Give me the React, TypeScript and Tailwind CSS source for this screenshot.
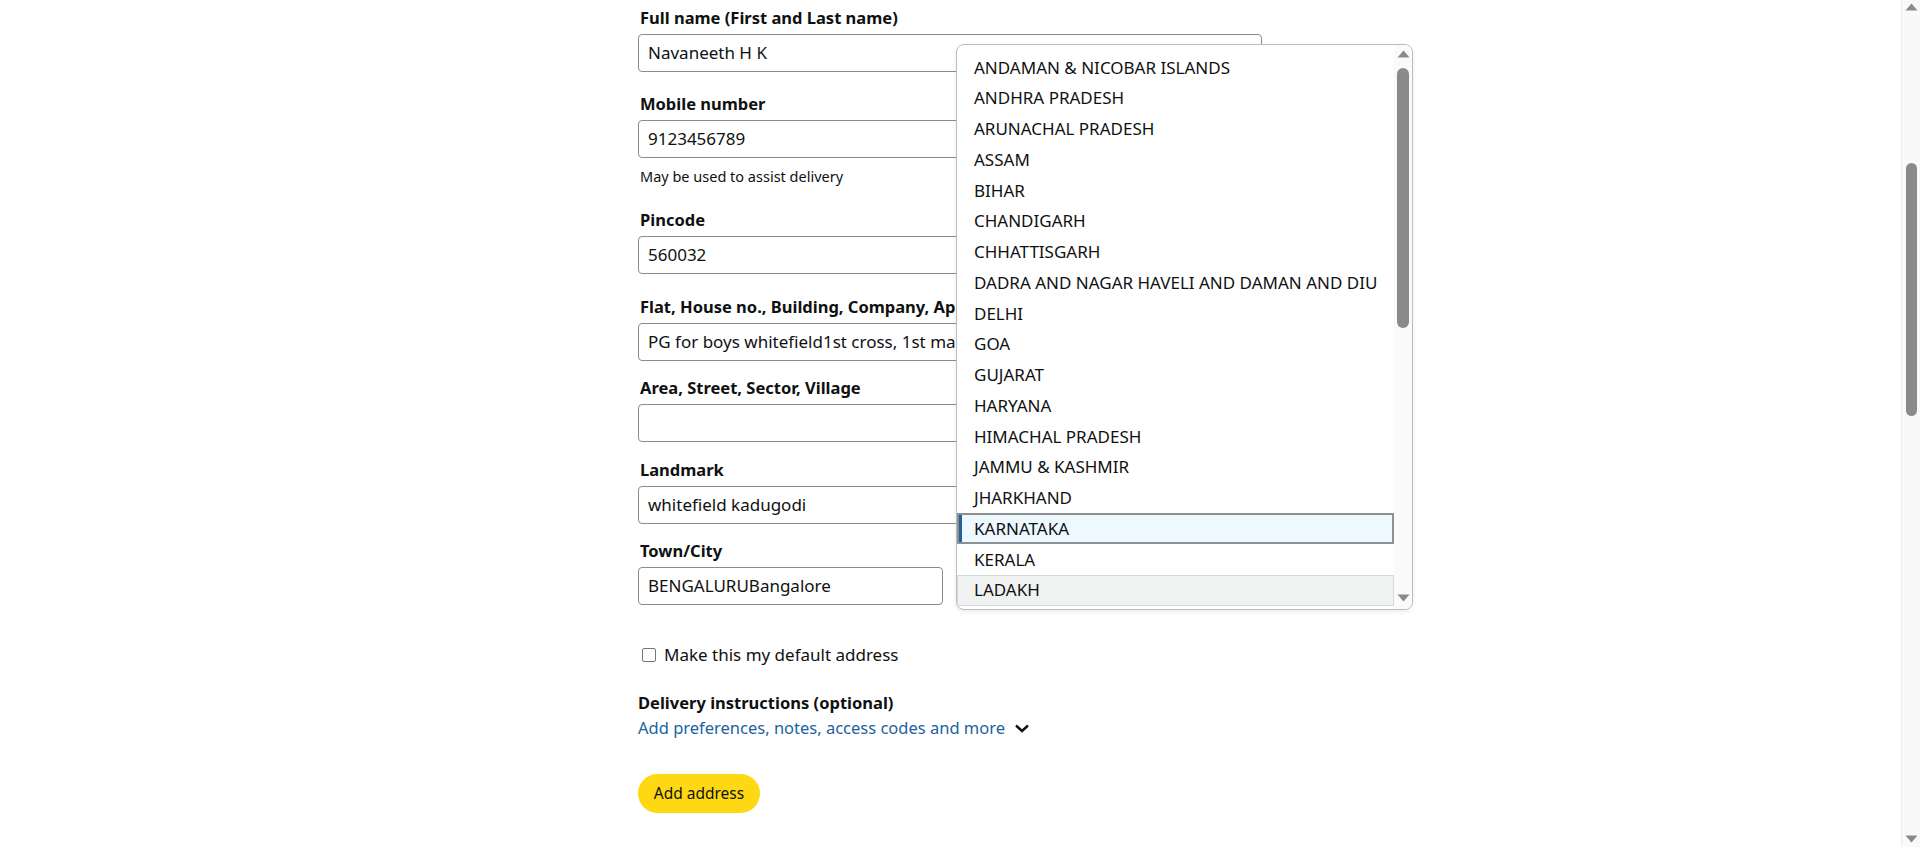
import React from "react";

const states = [
  "ANDAMAN & NICOBAR ISLANDS",
  "ANDHRA PRADESH",
  "ARUNACHAL PRADESH",
  "ASSAM",
  "BIHAR",
  "CHANDIGARH",
  "CHHATTISGARH",
  "DADRA AND NAGAR HAVELI AND DAMAN AND DIU",
  "DELHI",
  "GOA",
  "GUJARAT",
  "HARYANA",
  "HIMACHAL PRADESH",
  "JAMMU & KASHMIR",
  "JHARKHAND",
  "KARNATAKA",
  "KERALA",
  "LADAKH",
];

function Label({ children, className = "" }: { children: React.ReactNode; className?: string }) {
  return (
    <div className={"whitespace-nowrap text-[16.5px] font-bold leading-[20px] text-[#0F1111] " + className}>
      {children}
    </div>
  );
}

function Input({ value, className = "" }: { value: string; className?: string }) {
  return (
    <div
      className={
        "mt-[6px] flex h-[38px] items-center overflow-hidden whitespace-nowrap rounded-[4px] border border-[#888C8C] bg-white px-[9px] text-[17px] text-[#0F1111] " +
        className
      }
    >
      {value}
    </div>
  );
}

function Dropdown() {
  return (
    <div className="absolute left-[318px] top-[44px] flex h-[566px] w-[457px] overflow-hidden rounded-[8px] border border-[#BDBDBD] bg-white shadow-[0_2px_4px_rgba(0,0,0,0.08)]">
      <div className="flex-1 overflow-hidden pt-[7px]">
        {states.map((s) => {
          if (s === "KARNATAKA") {
            return (
              <div
                key={s}
                className="relative flex h-[30.75px] items-center whitespace-nowrap border-2 border-[#8D9090] bg-[#EDF8FF] pl-[15px] text-[17px] text-[#0F1111]"
              >
                <span className="absolute left-0 top-0 h-full w-[3px] bg-[#2162A1]" />
                {s}
              </div>
            );
          }
          if (s === "LADAKH") {
            return (
              <div
                key={s}
                className="flex h-[30.75px] items-center whitespace-nowrap border border-[#D5D9D9] bg-[#F0F2F2] pl-[16px] text-[17px] text-[#0F1111]"
              >
                {s}
              </div>
            );
          }
          return (
            <div key={s} className="flex h-[30.75px] items-center whitespace-nowrap pl-[17px] text-[17px] text-[#0F1111]">
              {s}
            </div>
          );
        })}
      </div>
      <div className="flex w-[18px] flex-col items-center bg-[#FAFAFA] pt-[5px]">
        <svg width="13" height="8" viewBox="0 0 13 8">
          <path d="M6.5 0.5 L12.5 7.5 L0.5 7.5 Z" fill="#8A8A8A" />
        </svg>
        <div className="mt-[10px] h-[260px] w-[12px] rounded-full bg-[#8A8A8A]" />
        <div className="flex-1" />
        <svg width="13" height="8" viewBox="0 0 13 8" className="mb-[7px]">
          <path d="M0.5 0.5 L12.5 0.5 L6.5 7.5 Z" fill="#8A8A8A" />
        </svg>
      </div>
    </div>
  );
}

function PageScrollbar() {
  return (
    <div className="flex h-full w-[19px] flex-col items-center border-l border-[#ECECEC] bg-[#F9F9F9]">
      <svg width="13" height="8" viewBox="0 0 13 8" className="mt-[3px]">
        <path d="M6.5 0.5 L12.5 7.5 L0.5 7.5 Z" fill="#8A8A8A" />
      </svg>
      <div className="mt-[152px] h-[253px] w-[11px] rounded-full bg-[#8A8A8A]" />
      <div className="flex-1" />
      <svg width="13" height="8" viewBox="0 0 13 8" className="mb-[4px]">
        <path d="M0.5 0.5 L12.5 0.5 L6.5 7.5 Z" fill="#8A8A8A" />
      </svg>
    </div>
  );
}

export default function App() {
  return (
    <div className="flex h-[847px] w-full overflow-hidden bg-white font-['Noto_Sans',sans-serif] text-[#0F1111]">
      <main className="flex-1">
        <div className="relative mx-auto w-[625px] pt-[8px]">
          <Label className="pl-[2px]">Full name (First and Last name)</Label>
          <Input value="Navaneeth H K" className="w-[624px]" />

          <Label className="mt-[22px] pl-[2px]">Mobile number</Label>
          <Input value="9123456789" className="w-[624px]" />
          <div className="mt-[10px] pl-[2px] text-[14.5px] leading-[16px] text-[#0F1111]">May be used to assist delivery</div>

          <Label className="mt-[26px] pl-[2px]">Pincode</Label>
          <Input value="560032" className="w-[624px]" />

          <Label className="mt-[23px] pl-[2px]">Flat, House no., Building, Company, Apartment</Label>
          <Input value="PG for boys whitefield1st cross, 1st main road" className="w-[624px]" />

          <Label className="mt-[17px] pl-[2px]">Area, Street, Sector, Village</Label>
          <Input value="" className="w-[624px]" />

          <Label className="mt-[18px] pl-[2px]">Landmark</Label>
          <Input value="whitefield kadugodi" className="w-[624px]" />

          <Label className="mt-[17px] pl-[2px]">Town/City</Label>
          <Input value="BENGALURUBangalore" className="w-[305px]" />

          <label className="mt-[40px] flex h-[20px] items-center gap-[8px] pl-[4px] text-[17px]">
            <span className="h-[14px] w-[14px] rounded-[2px] border border-[#767676] bg-white" />
            <span>Make this my default address</span>
          </label>

          <Label className="mt-[28px]">Delivery instructions (optional)</Label>
          <div className="mt-[5px] flex h-[20px] items-center gap-[9px] text-[16.5px] text-[#2162A1]">
            <span>Add preferences, notes, access codes and more</span>
            <svg width="16" height="10" viewBox="0 0 16 10">
              <path d="M2 2.5 L8 8 L14 2.5" fill="none" stroke="#0F1111" strokeWidth="2.4" />
            </svg>
          </div>

          <button className="mt-[36px] flex h-[39px] w-[122px] items-center justify-center rounded-full bg-[#FFD814] text-[15.5px] text-[#0F1111]">
            Add address
          </button>

          <Dropdown />
        </div>
      </main>
      <PageScrollbar />
    </div>
  );
}
